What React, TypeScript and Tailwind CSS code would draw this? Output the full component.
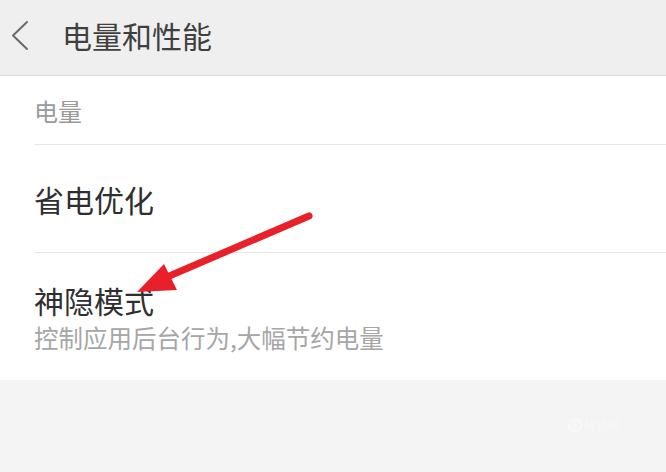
import { ChevronRight } from "lucide-react";

const font = { fontFamily: '"Noto Sans CJK SC", "Noto Sans", sans-serif' };

export default function App() {
  return (
    <div className="relative h-[472px] w-[666px] overflow-hidden bg-[#f4f4f4]" style={font}>
      <header className="flex h-[76px] items-center border-b border-[#dcdcdc] bg-[#efefef]">
        <svg className="ml-[11px] mb-[4px]" width="18" height="32" viewBox="0 0 18 32" fill="none">
          <polyline points="16,2 2,15.5 16,29" stroke="#6a6a6a" strokeWidth="2" strokeLinecap="round" strokeLinejoin="round" />
        </svg>
        <h1 className="ml-[33px] mb-[6px] text-[30px] leading-none text-[#3f3f3f]">电量和性能</h1>
      </header>

      <section className="bg-white">
        <div className="flex h-[68px] items-center pl-[34px] pt-[2px] text-[24px] text-[#9a9a9a]">电量</div>

        <div className="ml-[34px] border-t border-[#e6e6e6]">
          <div className="flex h-[107px] items-center justify-between">
            <span className="text-[30px] leading-none text-[#2f2f2f]">省电优化</span>
            <ChevronRight className="-mr-[22px] h-[28px] w-[28px] text-[#b5b5b5]" strokeWidth={1.3} />
          </div>
        </div>

        <div className="ml-[34px] border-t border-[#e6e6e6]">
          <div className="flex h-[127px] items-center justify-between">
            <div className="flex flex-col">
              <span className="text-[30px] leading-[42px] text-[#2f2f2f]">神隐模式</span>
              <span className="text-[24.5px] leading-[34px] text-[#a6a6a6]">控制应用后台行为,大幅节约电量</span>
            </div>
            <ChevronRight className="-mr-[22px] h-[28px] w-[28px] text-[#b5b5b5]" strokeWidth={1.3} />
          </div>
        </div>
      </section>

      <div className="absolute left-[568px] top-[416px] flex items-center gap-[2px] opacity-40">
        <span className="flex h-[14px] w-[14px] items-center justify-center rounded-full border-2 border-white text-[9px] font-bold text-white">S</span>
        <span className="text-[12px] text-white">快资讯</span>
      </div>

      <svg className="pointer-events-none absolute left-0 top-0" width="666" height="472">
        <line x1="309" y1="216" x2="160" y2="280" stroke="#e8202a" strokeWidth="7" strokeLinecap="round" />
        <polygon points="137,292 164,264 177,290" fill="#e8202a" />
      </svg>
    </div>
  );
}
